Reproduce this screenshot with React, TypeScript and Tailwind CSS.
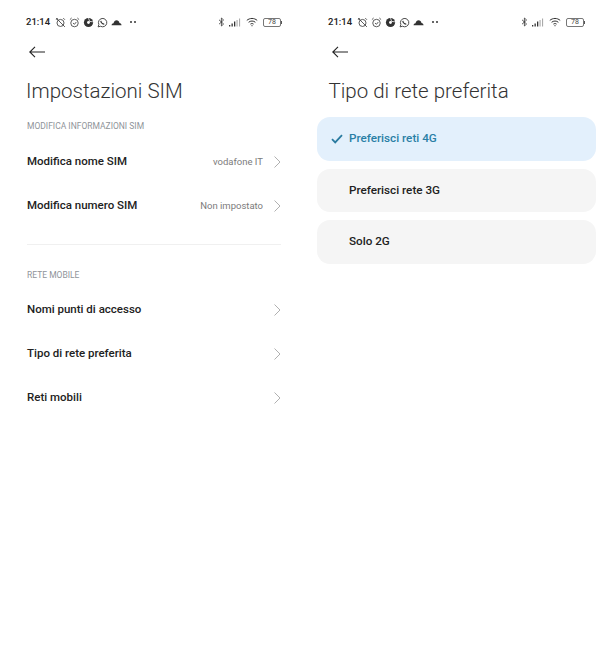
const StatusBar = () => (
  <div className="flex h-[14px] items-center justify-between text-[#222]">
    <div className="flex items-center gap-[3px]">
      <span className="mr-[1px] text-[9.5px] font-medium leading-none">21:14</span>
      {/* alarm off */}
      <svg className="ml-[1px]" width="11" height="11" viewBox="0 0 10 10" fill="none" stroke="#444" strokeWidth="0.8">
        <circle cx="5" cy="5.4" r="3.2" />
        <path d="M1 1 9 9M1 2.5 2.5 1M7.5 1 9 2.5" />
      </svg>
      {/* alarm */}
      <svg width="11" height="11" viewBox="0 0 10 10" fill="none" stroke="#444" strokeWidth="0.8">
        <circle cx="5" cy="5.5" r="3.4" />
        <path d="M3.6 5.5 5 6.6 6.6 4.6M.8 2.4 2.4 .9M7.6 .9 9.2 2.4" />
      </svg>
      {/* chrome like ball */}
      <svg width="11" height="11" viewBox="0 0 10 10">
        <circle cx="5" cy="5" r="4.2" fill="#333" />
        <circle cx="5" cy="5" r="1.3" fill="#fff" />
        <path d="M5 1 6 4 9 4.4" stroke="#fff" strokeWidth="0.7" fill="none" />
      </svg>
      {/* whatsapp */}
      <svg width="11" height="11" viewBox="0 0 10 10" fill="none" stroke="#333" strokeWidth="0.8">
        <path d="M1 9 1.7 6.8A3.8 3.8 0 1 1 3.2 8.4Z" />
        <path d="M3.5 3.5C3.6 5 5 6.5 6.6 6.5" strokeWidth="1.1" />
      </svg>
      {/* cloud */}
      <svg width="11" height="11" viewBox="0 0 10 10">
        <path d="M.5 7.5C.5 6.3 1.4 5.6 2.3 5.6 2.7 4 3.8 3 5 3 6.4 3 7.4 4 7.7 5.4 8.8 5.5 9.6 6.3 9.6 7.5Z" fill="#333" />
      </svg>
      <span className="ml-[5px] flex gap-[2px]">
        <span className="h-[2px] w-[2px] rounded-full bg-[#333]" />
        <span className="h-[2px] w-[2px] rounded-full bg-[#333]" />
      </span>
    </div>
    <div className="flex items-center gap-[4px]">
      {/* bluetooth */}
      <svg width="7" height="10" viewBox="0 0 7 10" fill="none" stroke="#333" strokeWidth="0.8">
        <path d="M1 2.8 5.6 7 3.4 9V1L5.6 3 1 7.2" />
      </svg>
      {/* signal */}
      <svg width="12" height="9" viewBox="0 0 12 9">
        <rect x="0" y="7" width="1.3" height="1.5" fill="#333" />
        <rect x="2.5" y="5.5" width="1.3" height="3" fill="#333" />
        <rect x="5" y="3.5" width="1.3" height="5" fill="#333" />
        <rect x="7.5" y="2" width="1.1" height="6.5" fill="#aaa" />
        <rect x="10" y="0.5" width="1.1" height="8" fill="#aaa" />
      </svg>
      {/* wifi */}
      <svg className="ml-[1px]" width="12" height="10" viewBox="0 0 12 10" fill="none" stroke="#333" strokeWidth="1">
        <path d="M.8 3.4C3.7.8 8.3.8 11.2 3.4M2.6 5.3C4.5 3.6 7.5 3.6 9.4 5.3M4.4 7.1C5.3 6.4 6.7 6.4 7.6 7.1" />
        <circle cx="6" cy="8.7" r="0.6" fill="#333" stroke="none" />
      </svg>
      {/* battery */}
      <div className="ml-[1px] flex items-center">
        <div className="flex h-[9px] w-[18px] items-center justify-center rounded-[2px] border border-[#777] text-[7px] leading-none text-[#444]">
          78
        </div>
        <div className="h-[3px] w-[1px] bg-[#555]" />
      </div>
    </div>
  </div>
);

const BackArrow = () => (
  <svg width="16" height="12" viewBox="0 0 16 12" fill="none" stroke="#222" strokeWidth="1.1">
    <path d="M16 6H.8M6 .8.8 6 6 11.2" />
  </svg>
);

const Chevron = () => (
  <svg width="7" height="12" viewBox="0 0 7 12" fill="none" stroke="#b0b0b0" strokeWidth="1">
    <path d="M.5 .5 6 6 .5 11.5" />
  </svg>
);

const SectionLabel = ({ children }: { children: string }) => (
  <div className="text-[8.5px] leading-[12px] text-[#8f9499]">{children}</div>
);

const Row = ({ label, value }: { label: string; value?: string }) => (
  <div className="flex h-[44px] items-center justify-between">
    <span className="text-[11.5px] font-medium text-[#222]">{label}</span>
    <div className="flex items-center gap-[11px]">
      {value && <span className="text-[9.5px] text-[#7b7b7b]">{value}</span>}
      <Chevron />
    </div>
  </div>
);

export default function App() {
  return (
    <div className="flex h-[670px] w-[610px] bg-white font-['Roboto',sans-serif]">
      {/* left screen */}
      <div className="w-[302px] pl-[26px] pr-[20px] pt-[15px]">
        <StatusBar />
        <div className="mt-[17px] flex h-[12px] items-center pl-[3px]">
          <BackArrow />
        </div>
        <h1 className="mt-[20px] h-[26px] text-[20.5px] font-light leading-[26px] text-[#333]">Impostazioni SIM</h1>
        <div className="mt-[16px] pl-[1px] pr-[1px]">
          <SectionLabel>MODIFICA INFORMAZIONI SIM</SectionLabel>
          <div className="mt-[8px]">
            <Row label="Modifica nome SIM" value="vodafone IT" />
            <Row label="Modifica numero SIM" value="Non impostato" />
          </div>
          <div className="mt-[16px] h-px bg-[#f0f0f0]" />
          <div className="mt-[24px]">
            <SectionLabel>RETE MOBILE</SectionLabel>
          </div>
          <div className="mt-[7px]">
            <Row label="Nomi punti di accesso" />
            <Row label="Tipo di rete preferita" />
            <Row label="Reti mobili" />
          </div>
        </div>
      </div>

      {/* right screen */}
      <div className="w-[308px] pt-[15px]">
        <div className="ml-[26px] w-[257px]">
          <StatusBar />
        </div>
        <div className="ml-[30px] mt-[17px] flex h-[12px] items-center">
          <BackArrow />
        </div>
        <h1 className="ml-[26.5px] mt-[20px] h-[26px] text-[20.5px] font-light leading-[26px] text-[#333]">Tipo di rete preferita</h1>
        <div className="ml-[15px] mr-[14px] mt-[13px] flex flex-col gap-[8px]">
          <div className="flex h-[43.5px] items-center rounded-[13px] bg-[#e3f0fc] pl-[14px] pt-px">
            <svg width="12" height="10" viewBox="0 0 12 10" fill="none" stroke="#2a7ba0" strokeWidth="1.8">
              <path d="M1 5.2 4.2 8.4 11 1.2" />
            </svg>
            <span className="ml-[6px] text-[11.7px] font-medium text-[#2a7fa6]">Preferisci reti 4G</span>
          </div>
          <div className="flex h-[43.5px] items-center rounded-[13px] bg-[#f5f5f5] pl-[32px] pt-px">
            <span className="text-[11.7px] font-medium text-[#222]">Preferisci rete 3G</span>
          </div>
          <div className="flex h-[43.5px] items-center rounded-[13px] bg-[#f5f5f5] pl-[32px] pt-px">
            <span className="text-[11.7px] font-medium text-[#222]">Solo 2G</span>
          </div>
        </div>
      </div>
    </div>
  );
}
